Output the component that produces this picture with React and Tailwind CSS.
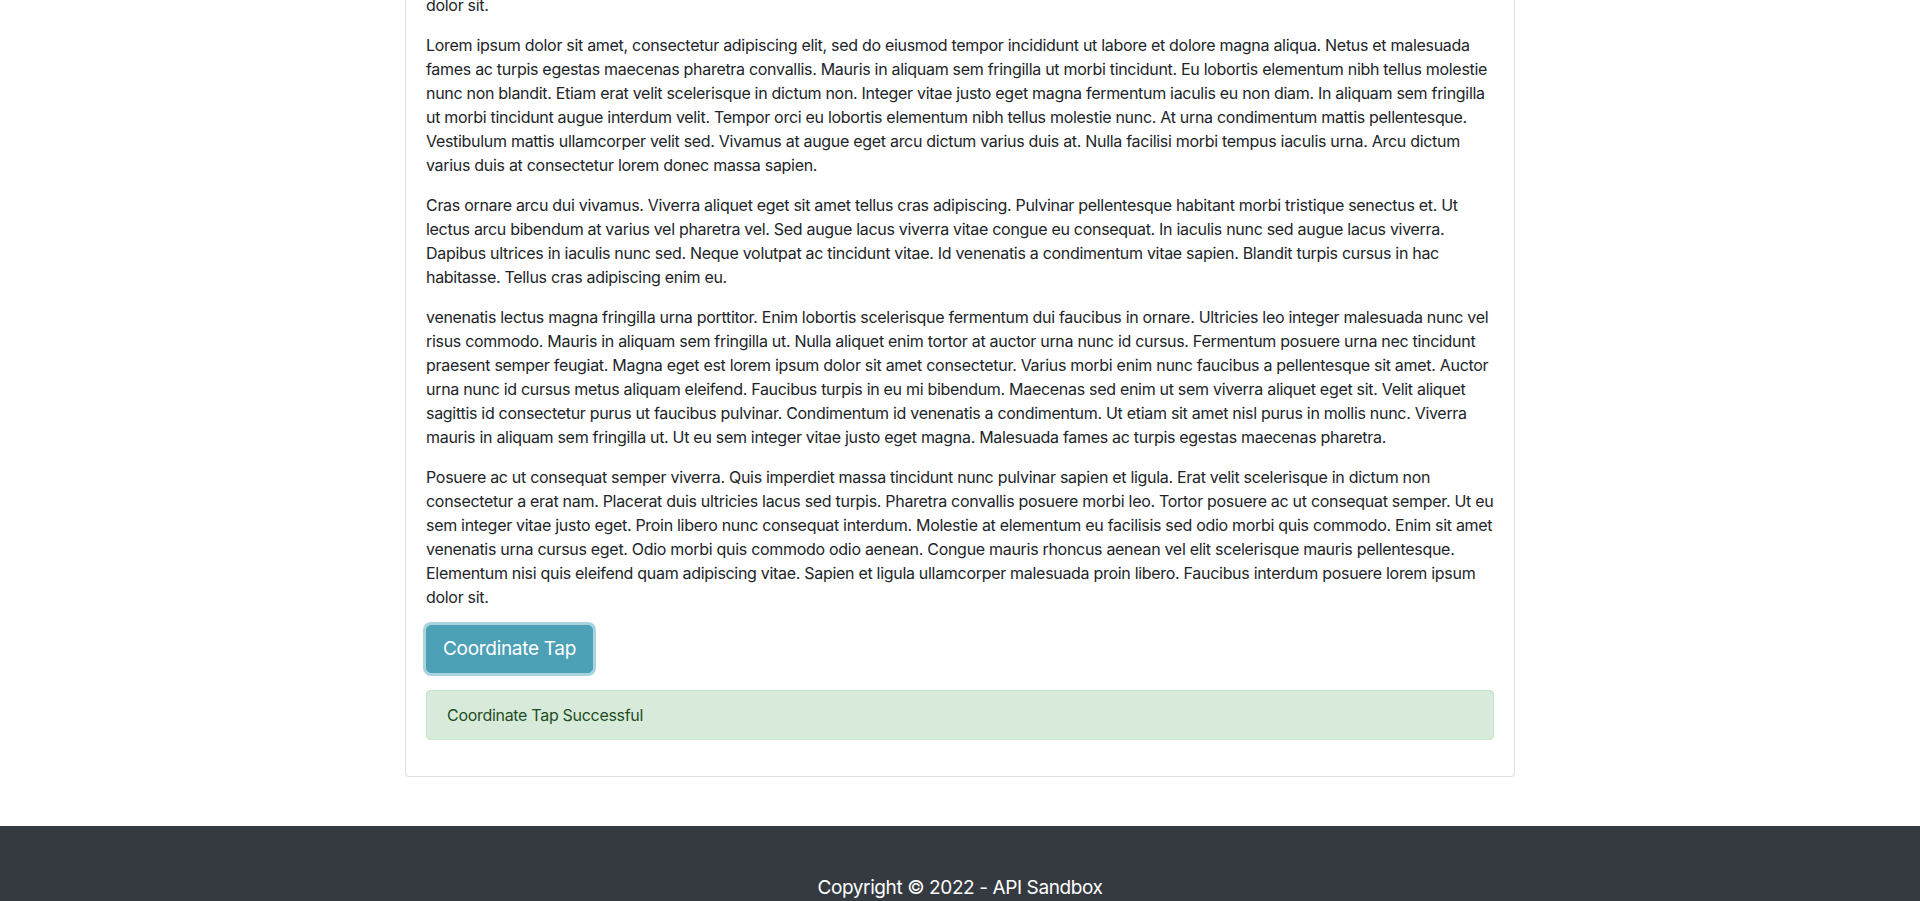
import React from 'react';

const paragraphs = [
  [
    'Lorem ipsum dolor sit amet, consectetur adipiscing elit, sed do eiusmod tempor incididunt ut labore et dolore magna aliqua. Netus et malesuada',
    'fames ac turpis egestas maecenas pharetra convallis. Mauris in aliquam sem fringilla ut morbi tincidunt. Eu lobortis elementum nibh tellus molestie',
    'nunc non blandit. Etiam erat velit scelerisque in dictum non. Integer vitae justo eget magna fermentum iaculis eu non diam. In aliquam sem fringilla',
    'ut morbi tincidunt augue interdum velit. Tempor orci eu lobortis elementum nibh tellus molestie nunc. At urna condimentum mattis pellentesque.',
    'Vestibulum mattis ullamcorper velit sed. Vivamus at augue eget arcu dictum varius duis at. Nulla facilisi morbi tempus iaculis urna. Arcu dictum',
    'varius duis at consectetur lorem donec massa sapien.',
  ],
  [
    'Cras ornare arcu dui vivamus. Viverra aliquet eget sit amet tellus cras adipiscing. Pulvinar pellentesque habitant morbi tristique senectus et. Ut',
    'lectus arcu bibendum at varius vel pharetra vel. Sed augue lacus viverra vitae congue eu consequat. In iaculis nunc sed augue lacus viverra.',
    'Dapibus ultrices in iaculis nunc sed. Neque volutpat ac tincidunt vitae. Id venenatis a condimentum vitae sapien. Blandit turpis cursus in hac',
    'habitasse. Tellus cras adipiscing enim eu.',
  ],
  [
    'venenatis lectus magna fringilla urna porttitor. Enim lobortis scelerisque fermentum dui faucibus in ornare. Ultricies leo integer malesuada nunc vel',
    'risus commodo. Mauris in aliquam sem fringilla ut. Nulla aliquet enim tortor at auctor urna nunc id cursus. Fermentum posuere urna nec tincidunt',
    'praesent semper feugiat. Magna eget est lorem ipsum dolor sit amet consectetur. Varius morbi enim nunc faucibus a pellentesque sit amet. Auctor',
    'urna nunc id cursus metus aliquam eleifend. Faucibus turpis in eu mi bibendum. Maecenas sed enim ut sem viverra aliquet eget sit. Velit aliquet',
    'sagittis id consectetur purus ut faucibus pulvinar. Condimentum id venenatis a condimentum. Ut etiam sit amet nisl purus in mollis nunc. Viverra',
    'mauris in aliquam sem fringilla ut. Ut eu sem integer vitae justo eget magna. Malesuada fames ac turpis egestas maecenas pharetra.',
  ],
  [
    'Posuere ac ut consequat semper viverra. Quis imperdiet massa tincidunt nunc pulvinar sapien et ligula. Erat velit scelerisque in dictum non',
    'consectetur a erat nam. Placerat duis ultricies lacus sed turpis. Pharetra convallis posuere morbi leo. Tortor posuere ac ut consequat semper. Ut eu',
    'sem integer vitae justo eget. Proin libero nunc consequat interdum. Molestie at elementum eu facilisis sed odio morbi quis commodo. Enim sit amet',
    'venenatis urna cursus eget. Odio morbi quis commodo odio aenean. Congue mauris rhoncus aenean vel elit scelerisque mauris pellentesque.',
    'Elementum nisi quis eleifend quam adipiscing vitae. Sapien et ligula ullamcorper malesuada proin libero. Faucibus interdum posuere lorem ipsum',
    'dolor sit.',
  ],
];

const Paragraph = ({ lines }) => (
  <p className="mb-4">
    {lines.map((line, i) => (
      <span key={i} className="block whitespace-nowrap">{line}</span>
    ))}
  </p>
);

const App = () => {
  const [tapped, setTapped] = React.useState(true);

  return (
    <div className="min-h-screen bg-white text-[16px] leading-6 tracking-[-0.3px] text-[#212529]" style={{ fontFamily: 'Inter, "Noto Sans", sans-serif' }}>
      <main className="w-[1110px] mx-auto mb-[49px]">
        <div className="border border-[#dfdfdf] border-t-0 rounded-b-[4px] px-5 pb-5">
          {/* tail of the paragraph above the fold */}
          <p className="-mt-[7px] mb-4">dolor sit.</p>
          {paragraphs.map((lines, i) => (
            <Paragraph key={i} lines={lines} />
          ))}

          <button
            type="button"
            onClick={() => setTapped(true)}
            className="block h-[48px] px-4 rounded-[5px] border border-[#4ca1b6] bg-[#4ca1b6] text-white text-[19px] leading-[30px] tracking-[-0.3px] whitespace-nowrap ring-[3px] ring-[#a9d4df]"
          >
            Coordinate Tap
          </button>

          {tapped && (
            <div className="mt-[17px] mb-4 h-[50px] px-5 py-3 border border-[#c8e4cc] bg-[#d8ebdb] text-[#1f4d23] rounded-[4px]">
              Coordinate Tap Successful
            </div>
          )}
        </div>
      </main>

      <footer className="bg-[#343a40] pt-[47px] pb-12">
        <p className="text-center text-white text-[19px] leading-[30px] tracking-[-0.4px]">Copyright © 2022 - API Sandbox</p>
      </footer>
    </div>
  );
};

export default App;
